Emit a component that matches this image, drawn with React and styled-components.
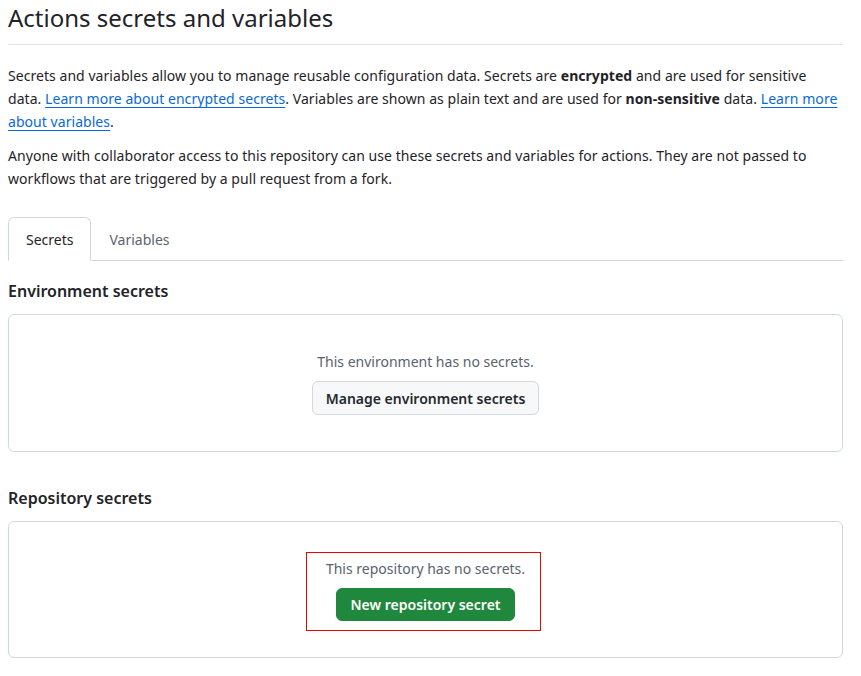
import React from 'react';
import styled, { createGlobalStyle } from 'styled-components';

const GlobalStyle = createGlobalStyle`
  body {
    margin: 0;
    background: #ffffff;
    color: #1f2328;
    font-family: "Noto Sans", "Liberation Sans", sans-serif;
    font-size: 14px;
  }
`;

const Page = styled('div')`
  padding: 3px 18px 20px 8px;
`;

const Title = styled('h1')`
  margin: 0;
  padding-bottom: 11px;
  border-bottom: 1px solid #d1d9e0b3;
  font-size: 24px;
  font-weight: 400;
  line-height: 30px;
`;

const Text = styled('p')`
  margin: ${({ first }) => (first ? '19px' : '11px')} 0 0;
  line-height: 23px;
  letter-spacing: 0.05px;
`;

const Link = styled('a')`
  color: #0969da;
  text-decoration: underline;
  text-underline-offset: 3px;
`;

const Tabs = styled('nav')`
  display: flex;
  margin-top: 27px;
  border-bottom: 1px solid #d1d9e0;
`;

const Tab = styled('div')`
  height: 42px;
  display: flex;
  align-items: center;
  padding: 0 17px;
  margin-bottom: -1px;
  color: ${({ active }) => (active ? '#1f2328' : '#59636e')};
  background: ${({ active }) => (active ? '#ffffff' : 'transparent')};
  border: 1px solid ${({ active }) => (active ? '#d1d9e0' : 'transparent')};
  border-bottom-color: ${({ active }) => (active ? '#ffffff' : 'transparent')};
  border-radius: 6px 6px 0 0;
`;

const Heading = styled('h2')`
  margin: ${({ spaced }) => (spaced ? '35px' : '19px')} 0 11px;
  font-size: 16px;
  font-weight: 600;
  line-height: 23px;
`;

const Card = styled('div')`
  border: 1px solid #d1d9e0;
  border-radius: 6px;
  padding: 36px 16px 36px;
  display: flex;
  flex-direction: column;
  align-items: center;
`;

const Empty = styled('div')`
  position: relative;
  display: flex;
  flex-direction: column;
  align-items: center;
`;

const Highlight = styled('div')`
  position: absolute;
  top: -6px;
  bottom: -10px;
  left: -20px;
  right: -16px;
  border: 1.5px solid #f00000;
  pointer-events: none;
`;

const Muted = styled('p')`
  margin: 0 0 9px;
  color: #59636e;
  line-height: 21px;
`;

const Button = styled('button')`
  font-family: inherit;
  font-size: 14px;
  font-weight: 600;
  height: ${({ primary }) => (primary ? '33px' : '34px')};
  padding: 0 13px;
  border-radius: 6px;
  border: 1px solid ${({ primary }) => (primary ? '#1f883d' : '#d1d9e0')};
  background: ${({ primary }) => (primary ? '#1f883d' : '#f6f8fa')};
  color: ${({ primary }) => (primary ? '#ffffff' : '#25292e')};
  cursor: pointer;
`;

export default function App() {
  return (
    <Page>
      <GlobalStyle />
      <Title>Actions secrets and variables</Title>
      <Text first>
        Secrets and variables allow you to manage reusable configuration data. Secrets are{' '}
        <strong>encrypted</strong> and are used for sensitive data.{' '}
        <Link href="#">Learn more about encrypted secrets</Link>. Variables are shown as plain
        text and are used for <strong>non-sensitive</strong> data.{' '}
        <Link href="#">Learn more about variables</Link>.
      </Text>
      <Text>
        Anyone with collaborator access to this repository can use these secrets and variables
        for actions. They are not passed to workflows that are triggered by a pull request from
        a fork.
      </Text>
      <Tabs>
        <Tab active>Secrets</Tab>
        <Tab>Variables</Tab>
      </Tabs>

      <Heading>Environment secrets</Heading>
      <Card>
        <Empty>
          <Muted>This environment has no secrets.</Muted>
          <Button>Manage environment secrets</Button>
        </Empty>
      </Card>

      <Heading spaced>Repository secrets</Heading>
      <Card>
        <Empty>
          <Muted>This repository has no secrets.</Muted>
          <Button primary>New repository secret</Button>
          <Highlight />
        </Empty>
      </Card>
    </Page>
  );
}
